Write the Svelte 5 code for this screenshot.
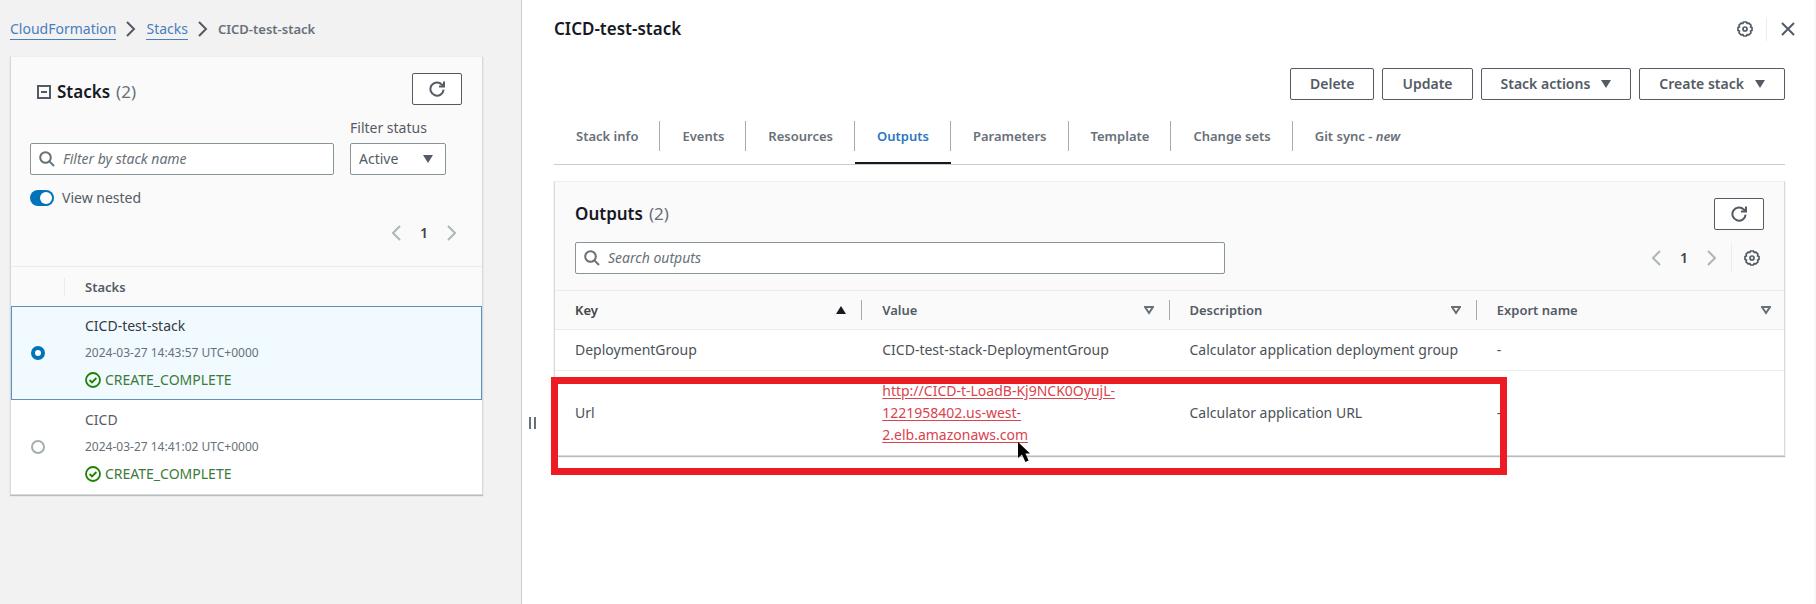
<script>
  const stacks = [
    { name: 'CICD-test-stack', time: '2024-03-27 14:43:57 UTC+0000', status: 'CREATE_COMPLETE' },
    { name: 'CICD', time: '2024-03-27 14:41:02 UTC+0000', status: 'CREATE_COMPLETE' }
  ];
  const tabs = ['Stack info', 'Events', 'Resources', 'Outputs', 'Parameters', 'Template', 'Change sets'];
  const columns = ['Key', 'Value', 'Description', 'Export name'];

  let selected = $state('CICD-test-stack');
  let active = $state('Outputs');
  let nested = $state(true);
</script>

{#snippet refresh()}
  <svg class="icon" viewBox="0 0 16 16" aria-hidden="true">
    <path d="M14.6 8.6A6.6 6.6 0 1 1 12.9 3.6L14.6 5.2" />
    <path d="M15 0.6V5.4H10" />
  </svg>
{/snippet}

{#snippet search()}
  <svg class="icon" viewBox="0 0 16 16" aria-hidden="true">
    <circle cx="6.5" cy="6.5" r="5.3" /><path d="M10.4 10.4L15 15" />
  </svg>
{/snippet}

{#snippet gear()}
  <svg class="icon" viewBox="0 0 16 16" aria-hidden="true">
    <path class="thin" d="M6.6 1H9.4L10.1 2.4L11.9 2.1L13.9 4.1L13.6 5.9L15 6.6V9.4L13.6 10.1L13.9 11.9L11.9 13.9L10.1 13.6L9.4 15H6.6L5.9 13.6L4.1 13.9L2.1 11.9L2.4 10.1L1 9.4V6.6L2.4 5.9L2.1 4.1L4.1 2.1L5.9 2.4Z" />
    <circle class="thin" cx="8" cy="8" r="2" />
  </svg>
{/snippet}

{#snippet caret()}
  <svg class="caret" viewBox="0 0 10 10" aria-hidden="true"><path d="M0 1H10L5 9Z" /></svg>
{/snippet}

{#snippet prev()}
  <svg class="icon" viewBox="0 0 16 16" aria-hidden="true"><path d="M12 1L5 8L12 15" /></svg>
{/snippet}

{#snippet next()}
  <svg class="icon" viewBox="0 0 16 16" aria-hidden="true"><path d="M4 1L11 8L4 15" /></svg>
{/snippet}

<div class="page">
  <aside class="side">
    <nav class="crumbs" aria-label="Breadcrumb">
      <a href="#cloudformation">CloudFormation</a>
      {@render next()}
      <a href="#stacks">Stacks</a>
      {@render next()}
      <strong>CICD-test-stack</strong>
    </nav>

    <section class="card stacks">
      <div class="tools">
        <div class="bar">
          <h2>
            <svg class="collapse" viewBox="0 0 14 14" aria-hidden="true"><path d="M1 1H13V13H1ZM4 7H10" /></svg>
            Stacks <span>(2)</span>
          </h2>
          <button class="btn square" aria-label="Refresh stacks">{@render refresh()}</button>
        </div>
        <div class="filters">
          <div class="field">
            {@render search()}
            <input type="text" placeholder="Filter by stack name" aria-label="Filter by stack name" />
          </div>
          <label class="status">
            Filter status
            <span class="pick">
              <select><option>Active</option></select>
              {@render caret()}
            </span>
          </label>
        </div>
        <label class="toggle">
          <input type="checkbox" role="switch" bind:checked={nested} />
          View nested
        </label>
        <div class="pages">
          <button aria-label="Previous page">{@render prev()}</button>
          <b>1</b>
          <button aria-label="Next page">{@render next()}</button>
        </div>
      </div>

      <div class="listhead"><i></i><b>Stacks</b></div>
      {#each stacks as s}
        <label class="stack" class:on={selected === s.name}>
          <input type="radio" name="stack" value={s.name} bind:group={selected} />
          <span class="info">
            <span>{s.name}</span>
            <small>{s.time}</small>
            <span class="ok">
              <svg class="icon" viewBox="0 0 16 16" aria-hidden="true">
                <circle cx="8" cy="8" r="7" /><path d="M4.6 8L7 10.4L11.4 6" />
              </svg>
              {s.status}
            </span>
          </span>
        </label>
      {/each}
    </section>
  </aside>

  <div class="grip"><i></i><i></i></div>

  <main>
    <header class="top">
      <h1>CICD-test-stack</h1>
      <div class="window">
        <button aria-label="Preferences">{@render gear()}</button>
        <i></i>
        <button aria-label="Close">
          <svg class="icon" viewBox="0 0 16 16" aria-hidden="true"><path d="M2 2L14 14M14 2L2 14" /></svg>
        </button>
      </div>
    </header>

    <div class="actions">
      <button class="btn">Delete</button>
      <button class="btn">Update</button>
      <button class="btn">Stack actions {@render caret()}</button>
      <button class="btn">Create stack {@render caret()}</button>
    </div>

    <nav class="tabs">
      {#each tabs as t}
        <button class:current={active === t} onclick={() => (active = t)}><span>{t}</span></button>
      {/each}
      <button class:current={active === 'git'} onclick={() => (active = 'git')}><span>Git sync - <em>new</em></span></button>
    </nav>

    <section class="card outputs">
      <div class="tools">
        <div class="bar">
          <h2>Outputs <span>(2)</span></h2>
          <button class="btn square" aria-label="Refresh outputs">{@render refresh()}</button>
        </div>
        <div class="row">
          <div class="field">
            {@render search()}
            <input type="text" placeholder="Search outputs" aria-label="Search outputs" />
          </div>
          <div class="pages">
            <button aria-label="Previous page">{@render prev()}</button>
            <b>1</b>
            <button aria-label="Next page">{@render next()}</button>
            <i></i>
            <button class="dark" aria-label="Table preferences">{@render gear()}</button>
          </div>
        </div>
      </div>

      <table>
        <thead>
          <tr>
            {#each columns as c, n}
              <th>
                <div class="th" class:sorted={n === 0}>
                  {c}
                  <svg class="sort" viewBox="0 0 10 10" aria-hidden="true">
                    <path d={n === 0 ? 'M0 9H10L5 1Z' : 'M1 2H9L5 8Z'} />
                  </svg>
                </div>
              </th>
            {/each}
          </tr>
        </thead>
        <tbody>
          <tr>
            <td>DeploymentGroup</td>
            <td>CICD-test-stack-DeploymentGroup</td>
            <td>Calculator application deployment group</td>
            <td>-</td>
          </tr>
          <tr>
            <td>Url</td>
            <td>
              <a href="http://CICD-t-LoadB-Kj9NCK0OyujL-1221958402.us-west-2.elb.amazonaws.com">http://CICD-t-LoadB-Kj9NCK0OyujL-<wbr />1221958402.us-west-<wbr />2.elb.amazonaws.com</a>
            </td>
            <td>Calculator application URL</td>
            <td>-</td>
          </tr>
        </tbody>
      </table>

      <div class="highlight"></div>
      <svg class="pointer" viewBox="0 0 12 20" aria-hidden="true">
        <path d="M0 0V16L4 12.4L7.4 20L10.6 18.6L7.4 11.4H12Z" />
      </svg>
    </section>
  </main>
</div>

<style>
  :global(body) {
    margin: 0;
    background: #fff;
  }
  .page {
    display: flex;
    min-height: 100vh;
    box-sizing: border-box;
    font: 14px/22px 'Noto Sans', 'Open Sans', sans-serif;
    color: #545b64;
    border-right: 2px solid #f7f7f7;
  }
  .page :global(*) {
    box-sizing: border-box;
  }
  button,
  input,
  select {
    font: inherit;
    color: inherit;
  }
  button {
    padding: 0;
    border: 0;
    background: none;
  }
  .icon {
    width: 16px;
    height: 16px;
    flex: none;
    display: block;
    fill: none;
    stroke: currentColor;
    stroke-width: 2;
  }
  .thin {
    stroke-width: 1.7;
  }
  .caret {
    width: 10px;
    height: 10px;
    flex: none;
    fill: currentColor;
  }

  .side {
    flex: 0 0 522px;
    padding: 18px 38px 0 10px;
    background: #f2f2f2;
    border-right: 1px solid #ccc;
  }
  .crumbs {
    display: flex;
    align-items: center;
    gap: 7px;
    margin-bottom: 16px;
  }
  .crumbs a {
    color: #4a7dbd;
    line-height: 20px;
    text-decoration: none;
    border-bottom: 1px solid #4a7dbd;
  }
  .crumbs strong {
    font-size: 13px;
    font-weight: 600;
    color: #687078;
  }
  .card {
    position: relative;
    background: #fff;
    border: 1px solid #d5dbdb;
    border-top-color: #eee;
    box-shadow: 0 1px 1px #bbb;
  }
  .tools {
    background: #fafafa;
    padding: 16px 20px 0;
  }
  .bar {
    display: flex;
    justify-content: space-between;
    align-items: center;
  }
  h1,
  h2 {
    margin: 0;
    color: #16191f;
    font-weight: 600;
  }
  h1 {
    font-size: 17px;
  }
  h2 {
    display: flex;
    align-items: center;
    gap: 6px;
    font-size: 17px;
    line-height: 26px;
  }
  h2 span {
    color: #687078;
    font-weight: 400;
  }
  .collapse {
    width: 14px;
    height: 14px;
    margin-left: 7px;
    fill: none;
    stroke: #545b64;
    stroke-width: 2;
  }
  .btn {
    display: flex;
    align-items: center;
    gap: 11px;
    height: 32px;
    padding: 0 19px;
    font-weight: 600;
    background: #fff;
    border: 1px solid #545b64;
    border-radius: 2px;
  }
  .square {
    padding: 0 16px;
  }
  .field {
    display: flex;
    align-items: center;
    gap: 8px;
    flex: 1;
    height: 32px;
    padding: 0 8px;
    color: #687078;
    background: #fff;
    border: 1px solid #879596;
    border-radius: 2px;
  }
  .field input {
    flex: 1;
    min-width: 0;
    padding: 0;
    border: 0;
    outline: 0;
    background: none;
  }
  .field input::placeholder {
    color: #687078;
    font-style: italic;
    opacity: 1;
  }
  .stacks .tools {
    padding-left: 19px;
  }
  .stacks .bar {
    align-items: flex-end;
  }
  .filters {
    display: flex;
    align-items: flex-end;
    gap: 16px;
    margin-top: 12px;
    padding-right: 16px;
  }
  .status {
    display: flex;
    flex-direction: column;
    gap: 4px;
  }
  .pick {
    display: grid;
    align-items: center;
    width: 96px;
    height: 32px;
    background: #fff;
    border: 1px solid #879596;
    border-radius: 2px;
  }
  .pick select {
    grid-area: 1 / 1;
    height: 30px;
    padding: 0 8px;
    border: 0;
    background: none;
    appearance: none;
  }
  .pick .caret {
    grid-area: 1 / 1;
    justify-self: end;
    margin-right: 12px;
    pointer-events: none;
  }
  .toggle {
    display: flex;
    align-items: center;
    gap: 8px;
    margin-top: 12px;
  }
  .toggle input {
    appearance: none;
    display: flex;
    justify-content: flex-end;
    width: 24px;
    height: 16px;
    margin: 0;
    padding: 2px;
    border-radius: 8px;
    background: #0073bb;
  }
  .toggle input::before {
    content: '';
    width: 12px;
    height: 12px;
    border-radius: 50%;
    background: #fff;
  }
  .toggle input:not(:checked) {
    justify-content: flex-start;
    background: #879596;
  }
  .pages {
    display: flex;
    align-items: center;
    gap: 16px;
    color: #aab7b8;
  }
  .pages b {
    color: #444;
    font-weight: 600;
    width: 8px;
    text-align: center;
  }
  .pages .dark {
    color: #545b64;
  }
  .stacks .pages {
    justify-content: flex-end;
    margin-top: 9px;
    padding: 4px 2px 22px 0;
  }
  .listhead {
    display: flex;
    align-items: center;
    height: 40px;
    padding-left: 53px;
    background: #fafafa;
    border-top: 1px solid #eaeded;
  }
  .listhead i {
    height: 18px;
    border-left: 1px solid #eaeded;
    margin-right: 20px;
  }
  .listhead b {
    font-size: 13px;
    font-weight: 600;
  }
  .stack {
    display: flex;
    align-items: center;
    gap: 40px;
    padding: 8px 19px;
    border: 1px solid transparent;
  }
  .stack.on {
    background: #f1faff;
    border-color: #5f8fbb;
  }
  .stack.on .info > :first-child {
    color: #333a42;
  }
  .stack input {
    appearance: none;
    width: 14px;
    height: 14px;
    margin: 0;
    border: 2px solid #a5adb0;
    border-radius: 50%;
    background: #fff;
  }
  .stack input:checked {
    border: 4px solid #0073bb;
  }
  .info {
    display: flex;
    flex-direction: column;
    gap: 5px;
  }
  .info small {
    font-size: 12px;
    color: #687078;
  }
  .ok {
    display: flex;
    align-items: center;
    gap: 4px;
    color: #3b7a3b;
  }
  .ok .icon {
    color: #1d8102;
    stroke-width: 1.8;
  }

  .grip {
    display: flex;
    align-items: center;
    gap: 3px;
    margin: 417px 0 auto 7px;
  }
  .grip i {
    width: 2px;
    height: 12px;
    background: #687078;
  }

  main {
    flex: 1;
    padding: 17px 29px 0 18px;
  }
  .top {
    display: flex;
    justify-content: space-between;
    align-items: center;
    height: 24px;
    margin-right: -11px;
  }
  .window {
    display: flex;
    align-items: center;
    gap: 13px;
  }
  .window i,
  .pages i {
    height: 24px;
    border-left: 1px solid #eaeded;
  }
  .outputs .pages i {
    margin-left: -5px;
    margin-right: -4px;
    height: 30px;
  }
  .actions {
    display: flex;
    justify-content: flex-end;
    gap: 8px;
    margin-top: 27px;
  }
  .tabs {
    display: flex;
    margin-top: 21px;
    border-bottom: 1px solid #ccc;
  }
  .tabs button {
    height: 43px;
    padding-bottom: 11px;
    border-bottom: 2px solid transparent;
    font-size: 13px;
    font-weight: 600;
    color: #687078;
  }
  .tabs span {
    display: block;
    padding: 4px 21px 4px 22px;
    border-right: 1px solid #aaa;
  }
  .tabs button:last-child span {
    border: 0;
  }
  .tabs .current {
    color: #2b77c0;
    border-bottom-color: #16191f;
  }
  .outputs {
    margin-top: 16px;
  }
  .row {
    display: flex;
    align-items: center;
    justify-content: space-between;
    margin-top: 12px;
    padding-bottom: 16px;
  }
  .row .field {
    max-width: 650px;
  }
  .row .pages {
    padding-right: 4px;
  }
  table {
    width: 100%;
    table-layout: fixed;
    border-collapse: collapse;
    text-align: left;
  }
  th {
    height: 39px;
    padding: 0;
    font-size: 13px;
    font-weight: 600;
    background: #fafafa;
    border-top: 1px solid #eaeded;
    border-bottom: 1px solid #eaeded;
  }
  .th {
    display: flex;
    align-items: center;
    justify-content: space-between;
    height: 20px;
    padding: 0 15px 0 20px;
    border-right: 1px solid #aaa;
  }
  th:last-child .th {
    padding-right: 12px;
    border-color: transparent;
  }
  .sort {
    width: 10px;
    height: 10px;
    fill: none;
    stroke: #687078;
    stroke-width: 2;
  }
  .sorted {
    color: #444;
  }
  .sorted .sort {
    fill: #16191f;
    stroke: none;
  }
  td {
    padding: 9px 36px 9px 20px;
    color: #4c5258;
    white-space: nowrap;
    border-bottom: 1px solid #eaeded;
  }
  tr:last-child td {
    border-bottom: 0;
  }
  td a {
    color: #d9434e;
    white-space: normal;
    text-underline-offset: 2px;
  }
  .highlight {
    position: absolute;
    top: 195px;
    left: -4px;
    right: 277px;
    bottom: -20px;
    border: 7px solid #ed1c24;
    pointer-events: none;
  }
  .pointer {
    position: absolute;
    left: 463px;
    bottom: -7px;
    width: 12px;
    height: 20px;
  }
</style>
